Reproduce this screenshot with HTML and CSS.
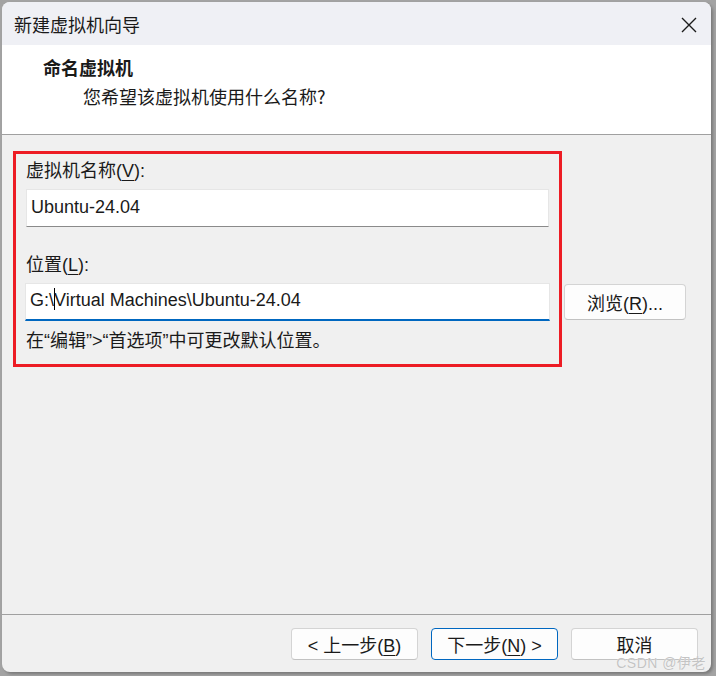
FILE: index.html
```html
<!DOCTYPE html>
<html lang="zh-CN">
<head>
    <meta charset="UTF-8">
    <title>新建虚拟机向导</title>
    <link rel="stylesheet" href="styles.css">
</head>
<body>
    <div class="window">
        <div class="titlebar">
            <span class="title">新建虚拟机向导</span>
            <svg class="close" width="16" height="16" viewBox="0 0 16 16">
                <path d="M1 1 L15 15 M15 1 L1 15" stroke="#1b1b1b" stroke-width="1.4" fill="none"/>
            </svg>
        </div>
        <div class="header">
            <div class="header-title">命名虚拟机</div>
            <div class="header-sub">您希望该虚拟机使用什么名称?</div>
        </div>
        <div class="content">
            <div class="highlight">
                <div class="label">虚拟机名称(<u>V</u>):</div>
                <div class="input">Ubuntu-24.04</div>
                <div class="label second">位置(<u>L</u>):</div>
                <div class="input focused">G:\<span class="caret"></span>Virtual Machines\Ubuntu-24.04</div>
                <div class="hint">在“编辑”&gt;“首选项”中可更改默认位置。</div>
            </div>
            <button class="btn browse">浏览(<u>R</u>)...</button>
        </div>
        <div class="footer">
            <button class="btn">&lt; 上一步(<u>B</u>)</button>
            <button class="btn primary">下一步(<u>N</u>) &gt;</button>
            <button class="btn">取消</button>
        </div>
        <div class="watermark">CSDN @伊老</div>
    </div>
</body>
</html>
```

FILE: styles.css
```css
html, body {
    margin: 0;
    padding: 0;
}
body {
    width: 716px;
    height: 676px;
    background-color: #a3a3a3;
    font-family: "Liberation Sans", "Noto Sans CJK SC", sans-serif;
    color: #1a1a1a;
    overflow: hidden;
}
.window {
    position: relative;
    margin: 2px 0 0 2px;
    width: 709px;
    height: 670px;
    border-radius: 8px;
    overflow: hidden;
    background-color: #f0f0f0;
    display: flex;
    flex-direction: column;
    box-shadow: 2px 2px 3px rgba(0, 0, 0, 0.25);
}
.titlebar {
    height: 43px;
    flex-shrink: 0;
    background-color: #eff0f5;
    display: flex;
    align-items: center;
    justify-content: space-between;
    padding: 0 14px 0 12px;
}
.title {
    font-size: 18px;
    line-height: 24px;
    font-family: "Noto Sans CJK SC", sans-serif;
}
.close {
    margin-top: 2px;
}
.header {
    background-color: #ffffff;
    height: 90px;
    flex-shrink: 0;
    border-bottom: 1px solid #a0a0a0;
    padding-left: 41px;
    box-sizing: border-box;
    font-family: "Noto Sans CJK SC", sans-serif;
}
.header-title {
    font-size: 18px;
    font-weight: bold;
    line-height: 24px;
    margin-top: 10px;
}
.header-sub {
    font-size: 18px;
    line-height: 24px;
    margin-top: 5px;
    padding-left: 40px;
}
.content {
    display: flex;
    align-items: flex-start;
    padding: 16px 0 0 11px;
    height: 480px;
    flex-shrink: 0;
    box-sizing: border-box;
    border-bottom: 1px solid #a0a0a0;
}
.highlight {
    width: 549px;
    box-sizing: border-box;
    border: 3px solid #ed1c24;
    padding: 4px 10px 10px 10px;
}
.label {
    font-size: 18px;
    line-height: 26px;
}
.label.second {
    margin-top: 25px;
}
u {
    text-underline-offset: 3px;
}
.input {
    margin-top: 5px;
    height: 38px;
    box-sizing: border-box;
    background-color: #ffffff;
    border: 1px solid #e6e6e6;
    border-bottom-color: #8a8a8a;
    font-size: 18px;
    line-height: 34px;
    padding-left: 4px;
    white-space: nowrap;
}
.input.focused {
    margin-left: -1px;
    margin-right: -1px;
    border-bottom: 2px solid #0067c0;
    line-height: 33px;
}
.caret {
    display: inline-block;
    width: 1px;
    height: 22px;
    background-color: #000;
    vertical-align: -4px;
    margin-right: -1px;
}
.hint {
    margin-top: 7px;
    font-size: 18px;
    line-height: 26px;
}
.btn {
    font-family: "Liberation Sans", "Noto Sans CJK SC", sans-serif;
    font-size: 18px;
    color: #1a1a1a;
    width: 127px;
    height: 32px;
    padding: 0;
    background-color: #fdfdfd;
    border: 1px solid #d4d4d4;
    border-bottom-color: #c2c2c2;
    border-radius: 4px;
}
.browse {
    margin: 133px 0 0 2px;
    width: 122px;
    height: 36px;
}
.footer {
    display: flex;
    justify-content: flex-end;
    gap: 13px;
    padding: 13px 13px 0 0;
}
.primary {
    border: 1px solid #0067c0;
}
.watermark {
    position: absolute;
    right: 5px;
    bottom: 0;
    font-size: 14px;
    line-height: 18px;
    letter-spacing: 0.5px;
    color: #c4c4c4;
    text-shadow: 0 0 1px #ffffff;
    font-family: "Liberation Sans", "Noto Sans CJK SC", sans-serif;
}
```
